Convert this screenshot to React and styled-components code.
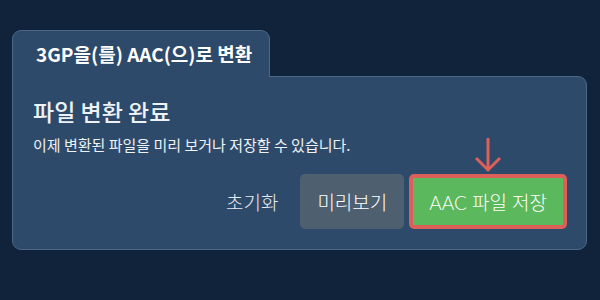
import React from "react";
import styled, { createGlobalStyle } from "styled-components";

const GlobalStyle = createGlobalStyle`
  html, body {
    margin: 0;
    padding: 0;
    background: #11233a;
  }
  body {
    font-family: Lato, "Noto Sans CJK KR", sans-serif;
    color: #eef2f6;
  }
`;

const App = () => {
  return (
    <Page>
      <GlobalStyle />
      <Tab>3GP을(를) AAC(으)로 변환</Tab>
      <Panel>
        <Heading>파일 변환 완료</Heading>
        <Description>이제 변환된 파일을 미리 보거나 저장할 수 있습니다.</Description>
        <Actions>
          <TextButton>초기화</TextButton>
          <Button>미리보기</Button>
          <SaveWrap>
            <Arrow width="30" height="36" viewBox="0 0 30 36">
              <path d="M15 1 V33 M3 21 L15 33 L27 21" />
            </Arrow>
            <Button $primary>AAC 파일 저장</Button>
          </SaveWrap>
        </Actions>
      </Panel>
    </Page>
  );
};

export default App;

const Page = styled.div`
  width: 600px;
  height: 300px;
  box-sizing: border-box;
  padding: 30px 13px 0 12px;
`;

const Tab = styled.div`
  position: relative;
  z-index: 1;
  width: 258px;
  height: 47px;
  box-sizing: border-box;
  margin-bottom: -1px;
  padding: 0 0 1px 23px;
  display: flex;
  align-items: center;
  background: #2d4a6a;
  border: 1px solid #4b6888;
  border-bottom: none;
  border-radius: 9px 9px 0 0;
  font-family: "Noto Sans CJK KR", sans-serif;
  font-size: 19px;
  font-weight: 700;
  color: #ffffff;
`;

const Panel = styled.div`
  background: #2d4a6a;
  border: 1px solid #4b6888;
  border-radius: 0 9px 9px 9px;
  padding: 19px 19px 20px 20px;
`;

const Heading = styled.h2`
  margin: 0;
  font-family: "Noto Sans CJK KR", sans-serif;
  font-size: 23px;
  font-weight: 500;
  line-height: 30px;
  color: #eef2f6;
`;

const Description = styled.p`
  margin: 9px 0 0;
  font-family: "Noto Sans CJK KR", sans-serif;
  font-size: 15px;
  line-height: 20px;
  color: #eef2f6;
`;

const Actions = styled.div`
  margin-top: 19px;
  display: flex;
  justify-content: flex-end;
  align-items: center;
  gap: 5px;
`;

const TextButton = styled.button`
  height: 55px;
  padding: 0 17px 0 0;
  background: none;
  border: none;
  font-family: "Noto Sans CJK KR", sans-serif;
  font-size: 19px;
  font-weight: 300;
  color: #e6ecf2;
  cursor: pointer;
`;

const Button = styled.button`
  height: 55px;
  box-sizing: border-box;
  padding: 0 ${({ $primary }) => ($primary ? "16px" : "17px")};
  background: ${({ $primary }) => ($primary ? "#5cb85c" : "#4e5f70")};
  border: ${({ $primary }) => ($primary ? "4px solid #dc5f59" : "none")};
  border-radius: 5px;
  font-family: Lato, "Noto Sans CJK KR", sans-serif;
  font-size: 19px;
  font-weight: 300;
  color: #ffffff;
  cursor: pointer;
`;

const SaveWrap = styled.div`
  position: relative;
  display: flex;
`;

const Arrow = styled.svg`
  position: absolute;
  top: -37px;
  left: 50%;
  transform: translateX(-50%);
  fill: none;
  stroke: #dc5f59;
  stroke-width: 3;
`;
